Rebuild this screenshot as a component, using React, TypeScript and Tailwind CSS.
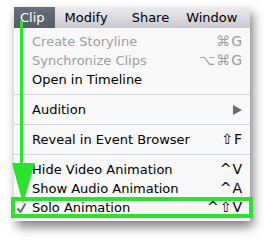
import React from 'react';

type Item =
  | { kind: 'sep' }
  | { kind: 'item'; label: string; keys?: string; disabled?: boolean; submenu?: boolean; checked?: boolean };

const items: Item[] = [
  { kind: 'item', label: 'Create Storyline', keys: '⌘G', disabled: true },
  { kind: 'item', label: 'Synchronize Clips', keys: '⌥⌘G', disabled: true },
  { kind: 'item', label: 'Open in Timeline' },
  { kind: 'sep' },
  { kind: 'item', label: 'Audition', submenu: true },
  { kind: 'sep' },
  { kind: 'item', label: 'Reveal in Event Browser', keys: '⇧F' },
  { kind: 'sep' },
  { kind: 'item', label: 'Hide Video Animation', keys: '^V' },
  { kind: 'item', label: 'Show Audio Animation', keys: '^A' },
  { kind: 'item', label: 'Solo Animation', keys: '^⇧V', checked: true },
];

const MenuRow: React.FC<{ item: Extract<Item, { kind: 'item' }> }> = ({ item }) => (
  <div className={`relative flex items-center h-[19px] pl-[18px] pr-[7px] ${item.disabled ? 'text-[#9e9e9e]' : 'text-black'}`}>
    {item.checked && (
      <svg className="absolute left-[3px] top-[5px] w-[9px] h-[10px]" viewBox="0 0 9 10">
        <path d="M0.5 5.5 L3.5 9 L8.5 0.5" fill="none" stroke="#6e6e6e" strokeWidth="2" strokeLinejoin="round" />
      </svg>
    )}
    <span className="flex-1">{item.label}</span>
    {item.keys && <span className="text-[14px] tracking-[1px]">{item.keys}</span>}
    {item.submenu && (
      <svg className="w-[9px] h-[10px] mr-[1px]" viewBox="0 0 9 10">
        <path d="M0 0 L9 5 L0 10 Z" fill="#6b6b6b" />
      </svg>
    )}
    {item.checked && (
      <div className="absolute -left-[3px] -right-[3px] -top-[1px] -bottom-[1px] border-4 border-[#2de22d]" />
    )}
  </div>
);

export default function App() {
  return (
    <div className="relative w-[264px] h-[247px] bg-white overflow-hidden" style={{ fontFamily: '"DejaVu Sans", sans-serif' }}>
      <div className="pt-[7px] pl-[14px]">
        <div className="w-[236px] text-[13px] shadow-[3px_6px_10px_rgba(0,0,0,0.5)]">
          <div className="flex h-[21px] items-center bg-gradient-to-b from-[#ececec] to-[#c9c8d0] text-black">
            <div className="h-full flex items-center pl-[6px] pr-[10px] bg-gradient-to-b from-[#6a707a] to-[#565c66] text-white">Clip</div>
            <div className="pl-[10px] pr-[12px]">Modify</div>
            <div className="pl-[12px] pr-[8px]">Share</div>
            <div className="pl-[9px]">Window</div>
          </div>
          <div className="bg-[#f8f8f8] py-[4px]">
            {items.map((it, i) =>
              it.kind === 'sep' ? (
                <div key={i} className="h-[11px] flex items-center">
                  <div className="w-full h-px bg-[#cdd5e0]" />
                </div>
              ) : (
                <MenuRow key={i} item={it} />
              )
            )}
          </div>
        </div>
      </div>
      <svg className="absolute left-0 top-0" width="264" height="247" viewBox="0 0 264 247">
        <rect x="20" y="21" width="3" height="145" fill="#2de22d" />
        <polygon points="12,163 35,163 23,204" fill="#2de22d" />
      </svg>
    </div>
  );
}
